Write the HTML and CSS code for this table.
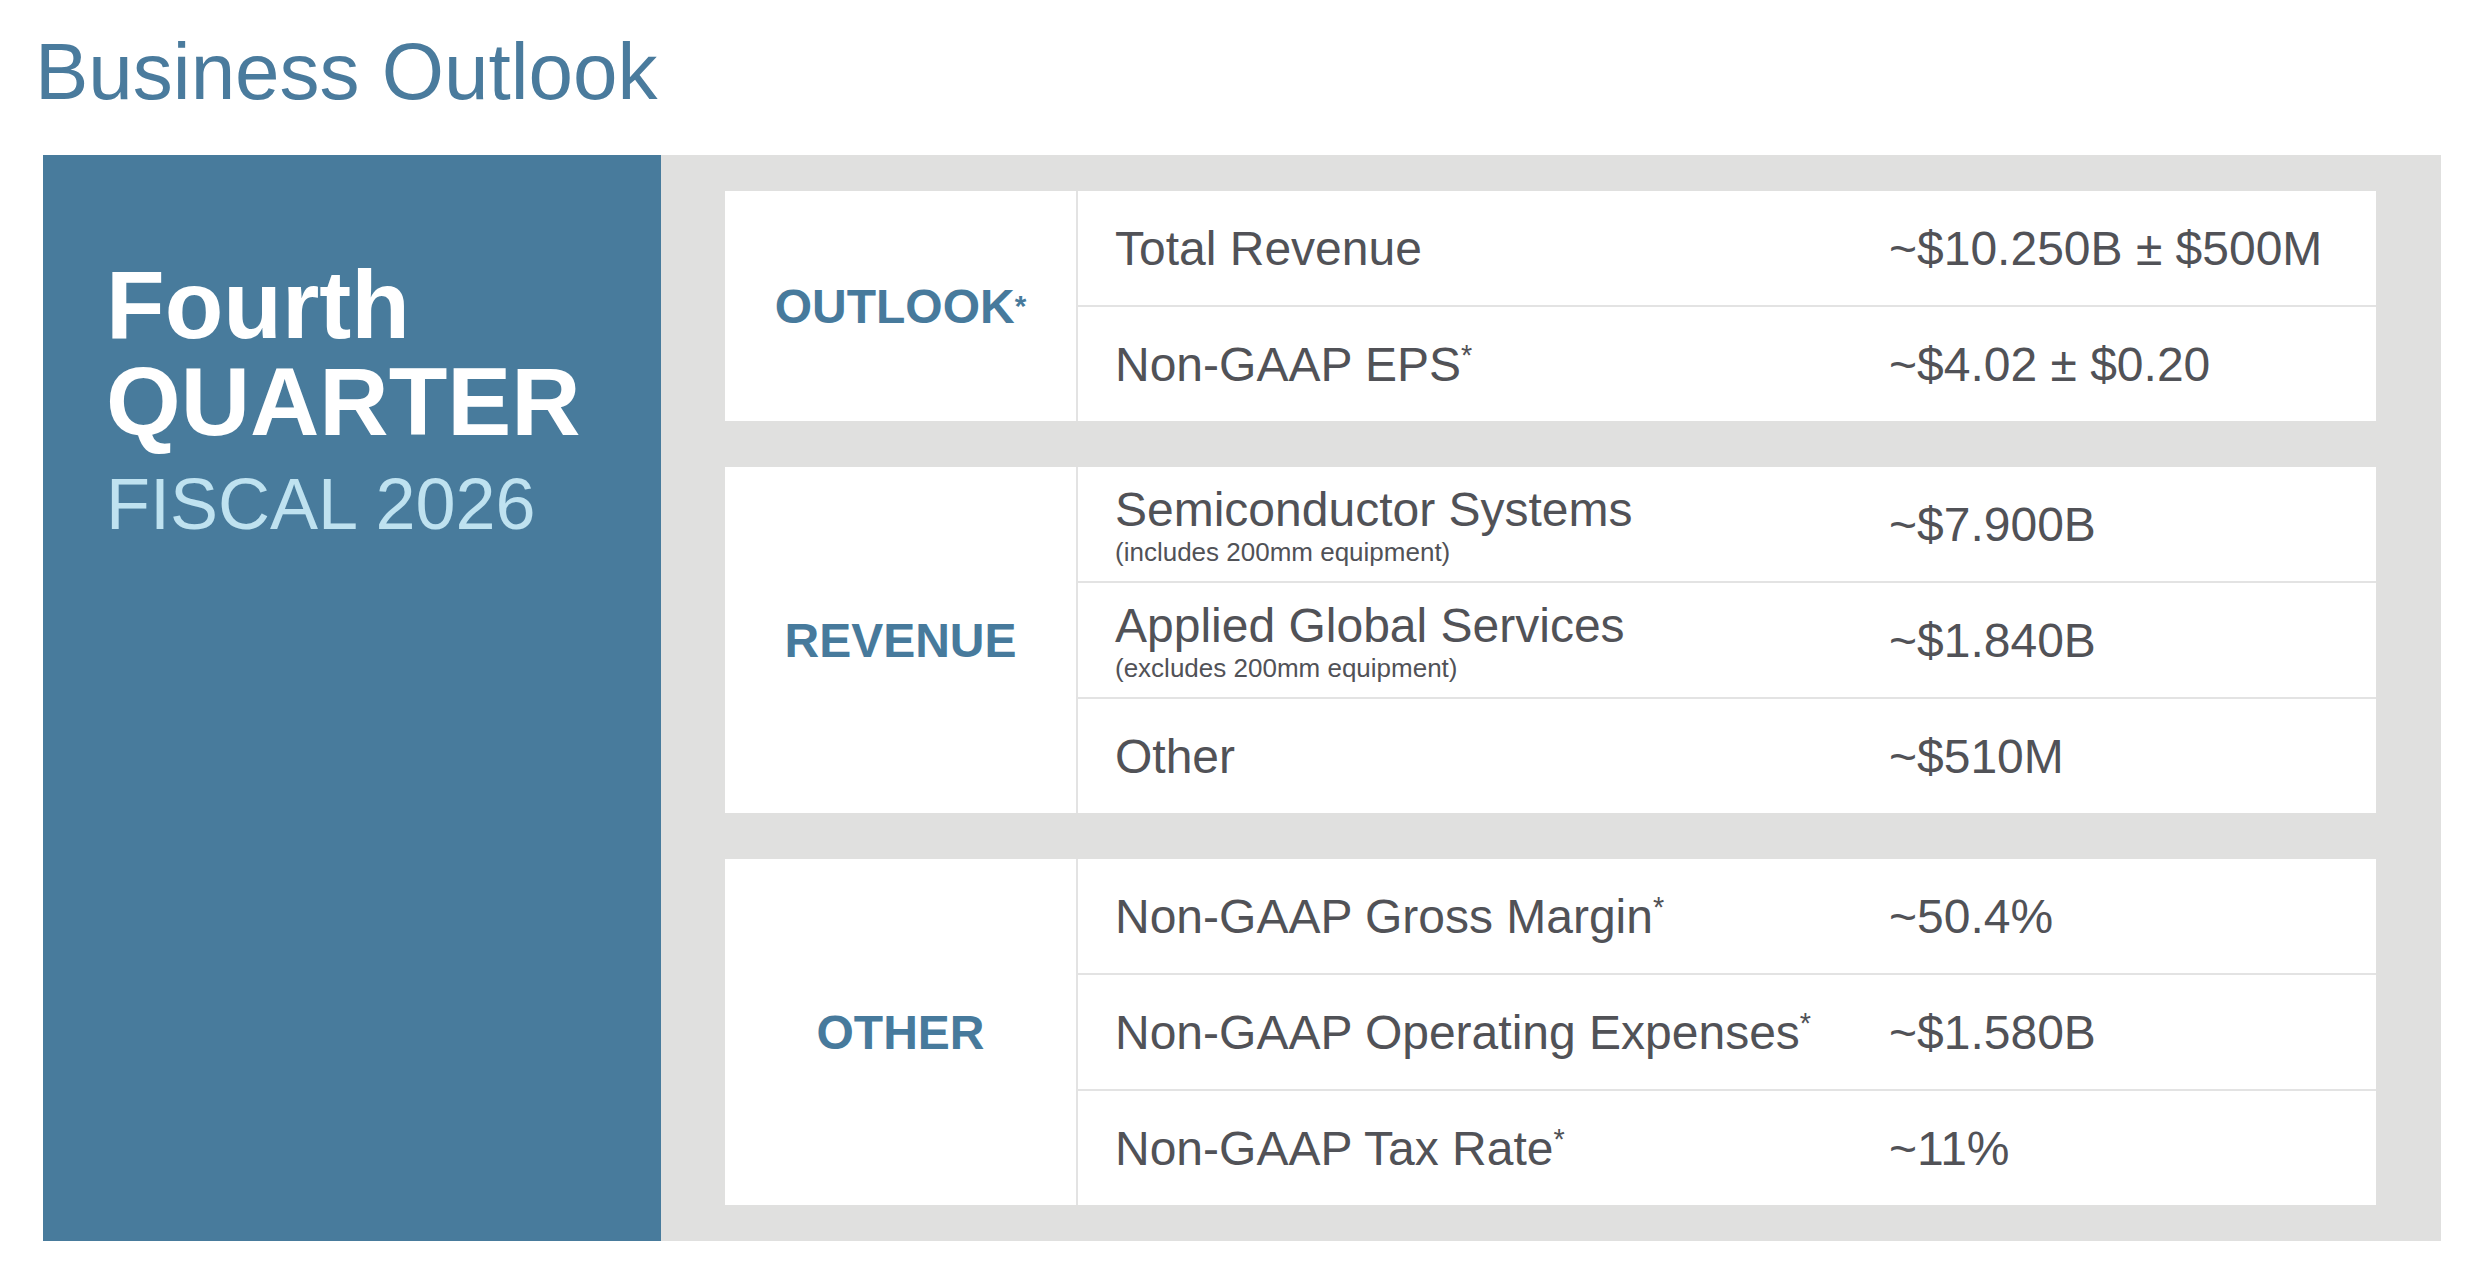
FILE: index.html
```html
<!DOCTYPE html>
<html lang="en">
<head>
<meta charset="utf-8">
<title>Business Outlook</title>
<link rel="stylesheet" href="styles.css">
</head>
<body>
<h1 class="title">Business Outlook</h1>
<div class="main">
  <div class="side">
    <div class="side-big">Fourth<br>QUARTER</div>
    <div class="side-fiscal">FISCAL 2026</div>
  </div>
  <div class="panel">
    <div class="card">
      <div class="cat">OUTLOOK<sup class="ast">*</sup></div>
      <div class="rows">
        <div class="row"><div class="lbl">Total Revenue</div><div class="val">~$10.250B ± $500M</div></div>
        <div class="row"><div class="lbl">Non-GAAP EPS<sup class="ast">*</sup></div><div class="val">~$4.02 ± $0.20</div></div>
      </div>
    </div>
    <div class="card">
      <div class="cat">REVENUE</div>
      <div class="rows">
        <div class="row"><div class="lbl">Semiconductor Systems<span class="note">(includes 200mm equipment)</span></div><div class="val">~$7.900B</div></div>
        <div class="row"><div class="lbl">Applied Global Services<span class="note">(excludes 200mm equipment)</span></div><div class="val">~$1.840B</div></div>
        <div class="row"><div class="lbl">Other</div><div class="val">~$510M</div></div>
      </div>
    </div>
    <div class="card">
      <div class="cat">OTHER</div>
      <div class="rows">
        <div class="row"><div class="lbl">Non-GAAP Gross Margin<sup class="ast">*</sup></div><div class="val">~50.4%</div></div>
        <div class="row"><div class="lbl">Non-GAAP Operating Expenses<sup class="ast">*</sup></div><div class="val">~$1.580B</div></div>
        <div class="row"><div class="lbl">Non-GAAP Tax Rate<sup class="ast">*</sup></div><div class="val">~11%</div></div>
      </div>
    </div>
  </div>
</div>
</body>
</html>
```
FILE: styles.css
```css
html, body {
  margin: 0;
  padding: 0;
  background: #ffffff;
  font-family: "Liberation Sans", Arial, Helvetica, sans-serif;
}

.title {
  margin: 0;
  padding: 32px 0 0 35px;
  font-size: 80px;
  line-height: 1;
  font-weight: normal;
  color: #4a7b9d;
}

.main {
  display: flex;
  margin: 43px 33px 0 43px;
}

.side {
  width: 618px;
  flex: none;
  background: #487b9c;
  padding: 101px 0 0 63px;
  box-sizing: border-box;
}

.side-big {
  font-size: 96px;
  line-height: 97px;
  font-weight: bold;
  color: #ffffff;
}

.side-fiscal {
  margin-top: 12px;
  font-size: 72px;
  line-height: 84px;
  color: #bfe2f0;
}

.panel {
  flex: 1;
  background: #e0e0df;
  padding: 36px 65px 36px 64px;
  display: flex;
  flex-direction: column;
  gap: 46px;
}

.card {
  display: grid;
  grid-template-columns: 351px 1fr;
  column-gap: 2px;
  background: #e3e3e3;
}

.cat {
  background: #ffffff;
  display: flex;
  align-items: center;
  justify-content: center;
  font-size: 48px;
  font-weight: bold;
  color: #477a9c;
}

.rows {
  display: flex;
  flex-direction: column;
  gap: 2px;
}

.row {
  height: 114px;
  background: #ffffff;
  display: grid;
  grid-template-columns: 774px 1fr;
  align-items: center;
  padding-left: 37px;
  color: #515257;
}

.lbl {
  font-size: 48px;
  line-height: 55px;
}

.val {
  font-size: 48px;
  line-height: 55px;
}

.note {
  display: block;
  font-size: 26px;
  line-height: 30px;
}

.ast {
  font-size: 0.6em;
  line-height: 0;
  vertical-align: 0.55em;
}

.cat .ast {
  font-size: 0.62em;
  vertical-align: 0.65em;
}
```
